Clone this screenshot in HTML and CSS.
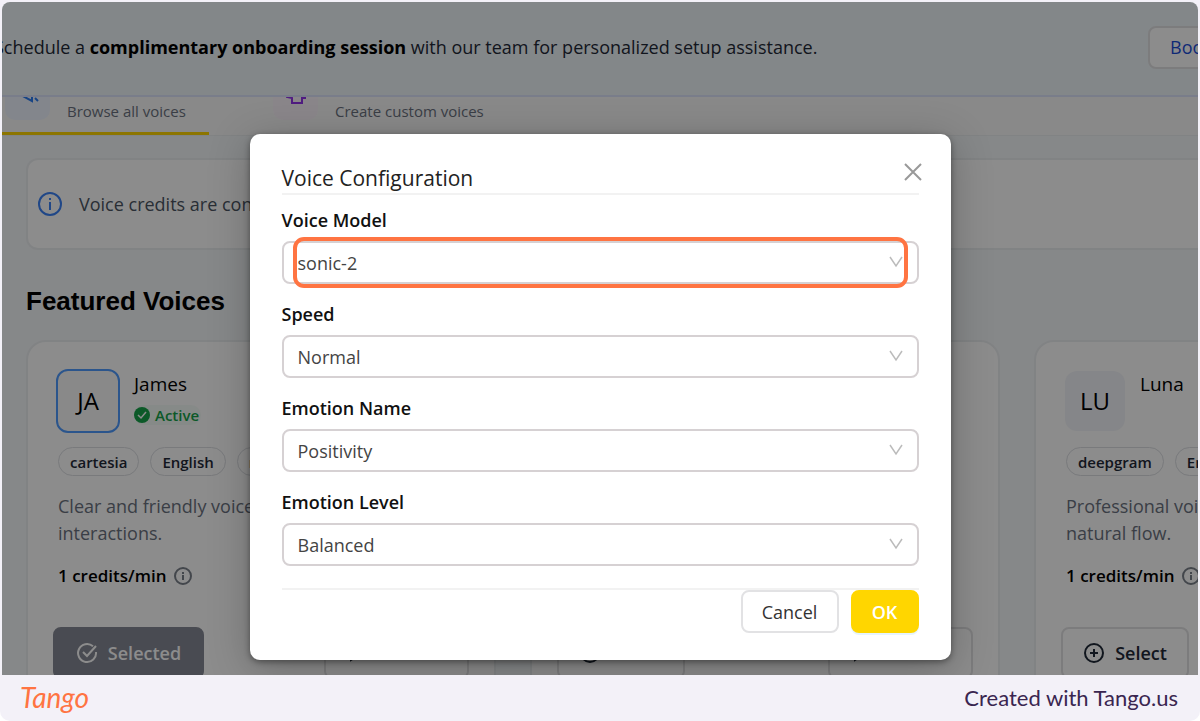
FILE: index.html
```
<!DOCTYPE html>
<html lang="en">
<head>
    <meta charset="UTF-8">
    <meta name="viewport" content="width=device-width, initial-scale=1.0">
    <title>Voice Configuration</title>
    <link rel="stylesheet" href="styles.css">
</head>
<body>
    <div class="shot">
        <main class="screen">
            <div class="banner">
                <p>Schedule a <strong>complimentary onboarding session</strong> with our team for personalized setup assistance.</p>
                <button class="btn book">Book</button>
            </div>

            <nav class="tabs">
                <a href="#" class="tab active">
                    <span class="tab-icon blue">
                        <svg width="24" height="24" viewBox="0 0 24 24" fill="none" stroke="currentColor" stroke-width="2"><path d="M3 12l13 7V5z"/><path d="M19 16l3 3"/></svg>
                    </span>
                    <span>Browse all voices</span>
                </a>
                <a href="#" class="tab">
                    <span class="tab-icon pink">
                        <svg width="24" height="24" viewBox="0 0 24 24" fill="none" stroke="currentColor" stroke-width="2"><path d="M3 3v12l5 1v5h10v-5h3V3z"/></svg>
                    </span>
                    <span>Create custom voices</span>
                </a>
            </nav>

            <div class="content">
                <div class="notice">
                    <svg width="26" height="26" viewBox="0 0 26 26" fill="none" stroke="currentColor" stroke-width="2"><circle cx="13" cy="13" r="11"/><path d="M13 11v8M13 7v2"/></svg>
                    <span>Voice credits are consumed per minute</span>
                </div>

                <h2>Featured Voices</h2>

                <div class="cards">
                    <article class="card">
                        <div class="card-head">
                            <div class="avatar selected">JA</div>
                            <div>
                                <h3>James</h3>
                                <span class="status">
                                    <svg width="16" height="16" viewBox="0 0 16 16"><circle cx="8" cy="8" r="8" fill="currentColor"/><path d="M4 8l3 3 5-6" fill="none" stroke="#fff" stroke-width="1.5"/></svg>
                                    Active
                                </span>
                            </div>
                        </div>
                        <div class="chips"><span>cartesia</span><span>English</span><span>male</span></div>
                        <p class="desc">Clear and friendly voice for<br>interactions.</p>
                        <div class="credits">1 credits/min
                            <svg width="20" height="20" viewBox="0 0 20 20" fill="none" stroke="currentColor" stroke-width="2"><circle cx="10" cy="10" r="8"/><path d="M10 9v5M10 6v2"/></svg>
                        </div>
                        <div class="actions">
                            <button class="btn done">
                                <svg width="22" height="22" viewBox="0 0 22 22" fill="none" stroke="currentColor" stroke-width="2"><path d="M17 4.300A9 9 0 1 0 20 10M7 10l4 4 9-10"/></svg>
                                Selected
                            </button>
                            <button class="btn preview" aria-label="Preview">
                                <svg width="16" height="20" viewBox="0 0 16 20" fill="none" stroke="currentColor" stroke-width="2"><path d="M3 2v15l11-7z"/></svg>
                            </button>
                        </div>
                    </article>

                    <article class="card">
                        <div class="card-head">
                            <div class="avatar">SA</div>
                            <div><h3>Sarah</h3></div>
                        </div>
                        <div class="chips"><span>cartesia</span><span>English</span></div>
                        <p class="desc">Warm and natural voice for<br>support.</p>
                        <div class="credits">1 credits/min</div>
                        <div class="actions">
                            <button class="btn select">
                                <svg width="22" height="22" viewBox="0 0 22 22" fill="none" stroke="currentColor" stroke-width="2"><circle cx="11" cy="11" r="9"/><path d="M11 7v8M7 11h8"/></svg>
                                Select
                            </button>
                            <button class="btn preview" aria-label="Preview">
                                <svg width="16" height="20" viewBox="0 0 16 20" fill="none" stroke="currentColor" stroke-width="2"><path d="M3 2v15l11-7z"/></svg>
                            </button>
                        </div>
                    </article>

                    <article class="card">
                        <div class="card-head">
                            <div class="avatar">LU</div>
                            <div><h3>Luna</h3></div>
                        </div>
                        <div class="chips"><span>deepgram</span><span>English</span></div>
                        <p class="desc">Professional voice with<br>natural flow.</p>
                        <div class="credits">1 credits/min
                            <svg width="20" height="20" viewBox="0 0 20 20" fill="none" stroke="currentColor" stroke-width="2"><circle cx="10" cy="10" r="8"/><path d="M10 9v5M10 6v2"/></svg>
                        </div>
                        <div class="actions">
                            <button class="btn select">
                                <svg width="22" height="22" viewBox="0 0 22 22" fill="none" stroke="currentColor" stroke-width="2"><circle cx="11" cy="11" r="9"/><path d="M11 7v8M7 11h8"/></svg>
                                Select
                            </button>
                            <button class="btn preview" aria-label="Preview">
                                <svg width="16" height="20" viewBox="0 0 16 20" fill="none" stroke="currentColor" stroke-width="2"><path d="M3 2v15l11-7z"/></svg>
                            </button>
                        </div>
                    </article>
                </div>
            </div>

            <!-- Modal -->
            <div class="overlay">
                <form class="modal" role="dialog" aria-labelledby="modal-title">
                    <button type="button" class="close" aria-label="Close">
                        <svg width="18" height="18" viewBox="0 0 18 18" fill="none" stroke="currentColor" stroke-width="2"><path d="M1 1l16 16M17 1L1 17"/></svg>
                    </button>
                    <h1 id="modal-title">Voice Configuration</h1>

                    <div class="field">
                        <label for="model">Voice Model</label>
                        <div class="picker">
                            <select id="model"><option>sonic-2</option></select>
                            <svg class="arrow" width="14" height="12" viewBox="0 0 14 12"><path d="M1 1l6 9 6-9"/></svg>
                            <div class="highlight"></div>
                        </div>
                    </div>
                    <div class="field">
                        <label for="speed">Speed</label>
                        <div class="picker">
                            <select id="speed"><option>Normal</option></select>
                            <svg class="arrow" width="14" height="12" viewBox="0 0 14 12"><path d="M1 1l6 9 6-9"/></svg>
                        </div>
                    </div>
                    <div class="field">
                        <label for="emotion">Emotion Name</label>
                        <div class="picker">
                            <select id="emotion"><option>Positivity</option></select>
                            <svg class="arrow" width="14" height="12" viewBox="0 0 14 12"><path d="M1 1l6 9 6-9"/></svg>
                        </div>
                    </div>
                    <div class="field">
                        <label for="level">Emotion Level</label>
                        <div class="picker">
                            <select id="level"><option>Balanced</option></select>
                            <svg class="arrow" width="14" height="12" viewBox="0 0 14 12"><path d="M1 1l6 9 6-9"/></svg>
                        </div>
                    </div>

                    <div class="modal-footer">
                        <button type="button" class="btn cancel">Cancel</button>
                        <button type="button" class="btn ok">OK</button>
                    </div>
                </form>
            </div>
        </main>

        <footer class="credit-bar">
            <span class="logo">Tango</span>
            <span>Created with Tango.us</span>
        </footer>
    </div>
</body>
</html>
```
FILE: styles.css
```
* {
    box-sizing: border-box;
}
body {
    margin: 0;
    background: #fff;
    font-family: "Open Sans", "Noto Sans", sans-serif;
    font-size: 18px;
    color: #1f2937;
}
h1, h2, h3, p {
    margin: 0;
}
svg {
    flex: none;
}
.shot {
    display: flex;
    flex-direction: column;
    height: 100vh;
    padding: 2px 2px 0;
    background: #f3f1f8;
    border-radius: 0 0 10px 10px;
    overflow: hidden;
}
.screen {
    position: relative;
    flex: 1;
    min-height: 0;
    overflow: hidden;
    background: #f5f7fa;
    border-radius: 8px 8px 0 0;
}
.btn {
    display: flex;
    align-items: center;
    justify-content: center;
    gap: 10px;
    height: 43px;
    padding: 0;
    border: 2px solid #e2e2e4;
    border-radius: 8px;
    background: #fff;
    color: inherit;
    font-family: inherit;
    font-size: 18px;
}

/* Banner */
.banner {
    display: flex;
    align-items: center;
    justify-content: space-between;
    height: 95px;
    margin-left: -8px;
    padding-bottom: 3px;
    background: #eff6f9;
    border-bottom: 2px solid #dce3fb;
    white-space: nowrap;
}
.banner strong {
    color: #000;
}
.book {
    flex: none;
    justify-content: flex-start;
    width: 96px;
    margin-right: -46px;
    padding-left: 20px;
    color: #1d4ed8;
}

/* Tabs */
.tabs {
    display: flex;
    align-items: flex-end;
    height: 39px;
    overflow: hidden;
    background: #fafafa;
    border-bottom: 1px solid #eceef0;
}
.tab {
    display: flex;
    align-items: flex-end;
    gap: 17px;
    width: 207px;
    height: 100px;
    padding: 0 3px 9px;
    border-bottom: 3px solid transparent;
    color: #6b7280;
    font-size: 15px;
    line-height: 24px;
    text-decoration: none;
    white-space: nowrap;
}
.tab + .tab {
    width: 260px;
    margin-left: 61px;
}
.tab.active {
    border-color: #ffd600;
}
.tab-icon {
    display: flex;
    justify-content: center;
    width: 45px;
    height: 45px;
    margin-bottom: 3px;
    padding-top: 7px;
    border-radius: 10px;
}
.blue {
    background: #eff4ff;
    color: #2b7cf0;
}
.pink {
    background: #fbf5fb;
    color: #9333ea;
}

.content {
    padding: 22px 0 0 24px;
}
.notice {
    display: flex;
    align-items: center;
    gap: 16px;
    height: 92px;
    padding-left: 9px;
    background: #fff;
    border: 2px solid #eceef1;
    border-right: 0;
    border-radius: 12px 0 0 12px;
    color: #4b5563;
}
.notice svg {
    color: #3b82f6;
}
h2 {
    margin: 35px 0 23px;
    color: #000;
    font-family: "Liberation Sans", Arial, sans-serif;
    font-size: 26px;
    line-height: 32px;
}

/* Voice cards */
.cards {
    display: grid;
    grid-template-columns: repeat(3, 470px);
    gap: 34px;
}
.card {
    height: 380px;
    padding: 27px 25px;
    background: #fff;
    border: 2px solid #eceef1;
    border-radius: 20px;
}
.card-head {
    display: flex;
    gap: 14px;
    height: 64px;
    margin-left: 3px;
}
.avatar {
    width: 60px;
    height: 60px;
    margin: 2px 1px;
    border-radius: 12px;
    background: #f3f5f9;
    color: #000;
    font-size: 24px;
    line-height: 60px;
    text-align: center;
}
.avatar.selected {
    width: 64px;
    height: 64px;
    margin: 0;
    border: 2px solid #4f9bff;
    background: #fafafa;
}
h3 {
    margin-bottom: 6px;
    color: #000;
    font-size: 19px;
    font-weight: 400;
    line-height: 30px;
}
.status {
    display: flex;
    align-items: center;
    gap: 5px;
    padding-right: 2px;
    border-radius: 12px;
    background: #f5fcf7;
    color: #16a34a;
    font-size: 15px;
    font-weight: 600;
    line-height: 20px;
}
.chips {
    display: flex;
    gap: 11px;
    margin: 14px 0 0 5px;
}
.chips span {
    height: 29px;
    padding: 0 11px;
    border: 1px solid #dcdee2;
    border-radius: 15px;
    font-size: 15px;
    font-weight: 600;
    line-height: 28px;
}
.desc {
    margin: 17px 0 0 5px;
    color: #6b7280;
    line-height: 27px;
}
.credits {
    display: flex;
    align-items: center;
    gap: 7px;
    margin: 15px 0 0 5px;
    color: #000;
    font-size: 17px;
    font-weight: 600;
    line-height: 28px;
}
.credits svg {
    color: #7b818b;
}
.actions {
    display: flex;
    justify-content: space-between;
    margin: 37px 0 0;
}
.actions .btn {
    height: 52px;
    font-weight: 600;
}
.actions .done {
    width: 151px;
    border-color: #858995;
    background: #858995;
    color: #fff;
}
.actions .select {
    width: 128px;
}
.actions .preview {
    justify-content: flex-start;
    width: 145px;
    padding-left: 22px;
}

/* Modal */
.overlay {
    position: absolute;
    inset: 0;
    display: flex;
    align-items: flex-start;
    justify-content: center;
    padding-top: 132px;
    background: rgba(0, 0, 0, 0.45);
}
.modal {
    position: relative;
    width: 100%;
    max-width: 701px;
    padding: 30px 32px 27px;
    border-radius: 10px;
    background: #fff;
    box-shadow: 0 8px 40px rgba(0, 0, 0, 0.25), 0 2px 6px rgba(0, 0, 0, 0.4);
}
h1 {
    padding-bottom: 1px;
    border-bottom: 2px solid #f2f2f2;
    color: #222;
    font-size: 21px;
    font-weight: 500;
    line-height: 28px;
}
.close {
    position: absolute;
    top: 29px;
    right: 29px;
    display: flex;
    padding: 0;
    border: 0;
    background: none;
    color: #999;
}
.field {
    padding-top: 12px;
    margin-bottom: 5px;
}
.field label {
    display: block;
    margin-bottom: 7px;
    color: #111;
    font-weight: 600;
    line-height: 27px;
}
.picker {
    position: relative;
}
.picker select {
    display: block;
    appearance: none;
    width: 100%;
    height: 43px;
    padding: 0 14px;
    border: 2px solid #d6d1d3;
    border-radius: 8px;
    background: #fff;
    color: #444;
    font-family: inherit;
    font-size: 18px;
}
.arrow {
    position: absolute;
    top: 15px;
    right: 16px;
    fill: none;
    stroke: #bbb;
    stroke-width: 1.5;
}
.highlight {
    position: absolute;
    inset: -4px 11px;
    border: 4px solid #ff7442;
    border-radius: 11px;
    pointer-events: none;
}
.modal-footer {
    display: flex;
    justify-content: flex-end;
    gap: 12px;
    margin-top: 22px;
    border-top: 2px solid #f2f2f2;
}
.cancel {
    width: 98px;
    color: #333;
}
.ok {
    width: 68px;
    border-color: #ffd600;
    background: #ffd600;
    color: #fff;
    font-weight: 600;
    box-shadow: 0 2px 0 #e6f4ff;
}

.credit-bar {
    display: flex;
    align-items: center;
    justify-content: space-between;
    height: 46px;
    padding: 0 20px 2px 18px;
    color: #3a2650;
    font-family: Lato, sans-serif;
    font-size: 22px;
}
.logo {
    color: #ff7442;
    font-size: 28px;
    font-style: italic;
}
```
